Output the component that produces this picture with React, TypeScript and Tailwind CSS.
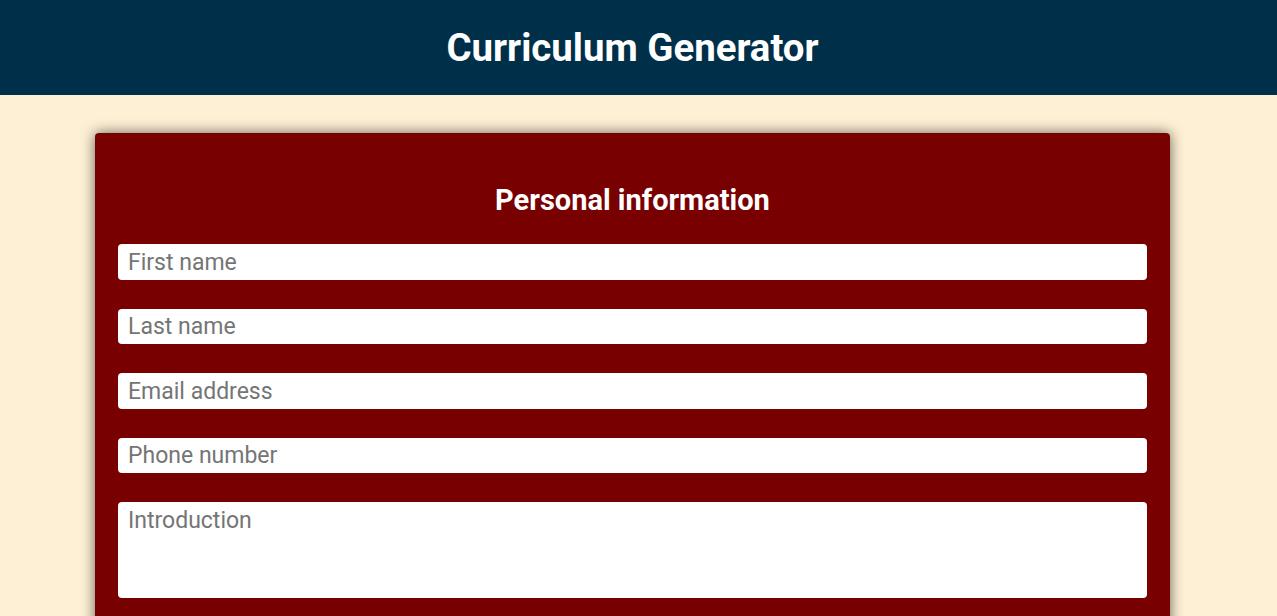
export default function App() {
  const fields = ['First name', 'Last name', 'Email address', 'Phone number'];

  return (
    <div className="min-h-[616px] bg-[#fdf0d5] font-['Roboto',sans-serif]">
      {/* Header */}
      <header className="h-[95px] bg-[#003049] pr-[12px] flex items-center justify-center">
        <h1 className="text-[38.4px] font-bold text-white leading-none pt-[1px]">Curriculum Generator</h1>
      </header>

      {/* Form card */}
      <main className="w-[1265px] px-[95px] pt-[38px]">
        <section className="bg-[#780000] rounded-[4px] shadow-[0_0_14px_rgba(0,0,0,0.6)] px-[23px] pt-[52px] pb-[30px]">
          <h2 className="text-[29px] font-bold text-white text-center leading-[30px] mb-[29px]">
            Personal information
          </h2>
          <div className="flex flex-col gap-[29px]">
            {fields.map((f) => (
              <input
                key={f}
                type="text"
                placeholder={f}
                className="h-[35.5px] w-full rounded-[4px] bg-white px-[10px] pt-[1px] text-[23px] text-black placeholder:text-[#757575] outline-none"
              />
            ))}
            <textarea
              placeholder="Introduction"
              className="h-[96px] w-full resize-none rounded-[4px] bg-white px-[10px] pt-[5px] text-[23px] leading-[27px] text-black placeholder:text-[#757575] outline-none"
            />
          </div>
        </section>
      </main>
    </div>
  );
}
